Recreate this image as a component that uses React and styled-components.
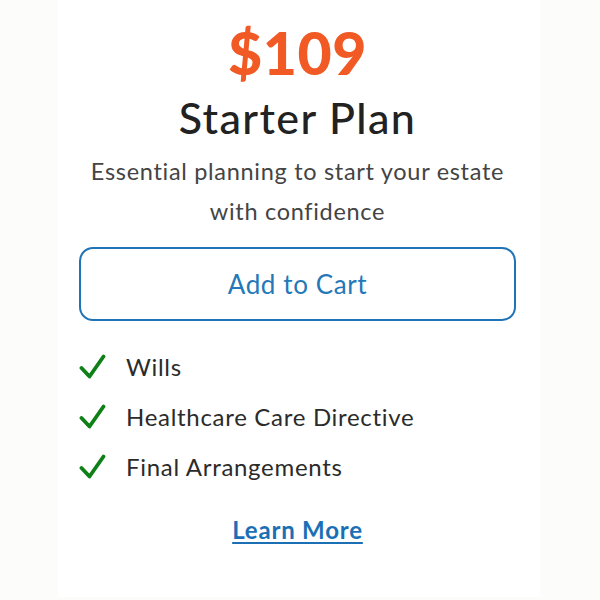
import React from "react";
import styled, { createGlobalStyle } from "styled-components";

const features = ["Wills", "Healthcare Care Directive", "Final Arrangements"];

const GlobalStyle = createGlobalStyle`
  body {
    margin: 0;
    background: #fcfcfa;
    font-family: "Lato", "Open Sans", sans-serif;
  }
`;

const Page = styled.div`
  width: 600px;
  height: 600px;
  display: flex;
  justify-content: flex-start;
  padding-left: 58px;
  box-sizing: border-box;
`;

const Card = styled.div`
  width: 482px;
  height: 597px;
  background: #ffffff;
  display: flex;
  flex-direction: column;
  align-items: center;
  padding: 18px 24px 0 21px;
  box-sizing: border-box;
`;

const Price = styled.div`
  color: #f15a24;
  font-size: 59px;
  font-weight: 900;
  line-height: 70px;
  letter-spacing: 0.5px;
`;

const Title = styled.h2`
  margin: 4px 0 0;
  color: #222;
  font-size: 43px;
  font-weight: 500;
  line-height: 52px;
  letter-spacing: 1.4px;
`;

const Description = styled.p`
  margin: 7px 0 0;
  color: #444;
  font-size: 23.5px;
  line-height: 40px;
  letter-spacing: 0.7px;
  text-align: center;
  max-width: 440px;
`;

const CartButton = styled.button`
  margin-top: 16px;
  width: 100%;
  height: 74px;
  border: 2.5px solid #1f73b7;
  border-radius: 14px;
  background: #fff;
  color: #2478b8;
  font-family: inherit;
  font-size: 26px;
  letter-spacing: 0.6px;
  cursor: pointer;
`;

const List = styled.ul`
  list-style: none;
  margin: 32px 0 0;
  padding: 0;
  align-self: stretch;
  display: flex;
  flex-direction: column;
  gap: 23px;
`;

const Item = styled.li`
  display: flex;
  align-items: center;
  gap: 20px;
  color: #2b2b2b;
  font-size: 24px;
  line-height: 27px;
  letter-spacing: 0.7px;
`;

const LearnMore = styled.a`
  margin-top: 35px;
  color: #1a6fb5;
  font-size: 24px;
  font-weight: 700;
  letter-spacing: 0.8px;
  text-decoration: underline;
  text-underline-offset: 3px;
`;

const Check = () => (
  <svg width="27" height="27" viewBox="0 0 27 27">
    <path
      d="M2.5 15 L10.5 23.5 L24.5 3.5"
      fill="none"
      stroke="#0f7f17"
      strokeWidth="3.8"
      strokeLinecap="round"
      strokeLinejoin="round"
    />
  </svg>
);

export default function App() {
  return (
    <Page>
      <GlobalStyle />
      <Card>
        <Price>$109</Price>
        <Title>Starter Plan</Title>
        <Description>
          Essential planning to start your estate with confidence
        </Description>
        <CartButton>Add to Cart</CartButton>
        <List>
          {features.map((f) => (
            <Item key={f}>
              <Check />
              {f}
            </Item>
          ))}
        </List>
        <LearnMore href="#">Learn More</LearnMore>
      </Card>
    </Page>
  );
}
